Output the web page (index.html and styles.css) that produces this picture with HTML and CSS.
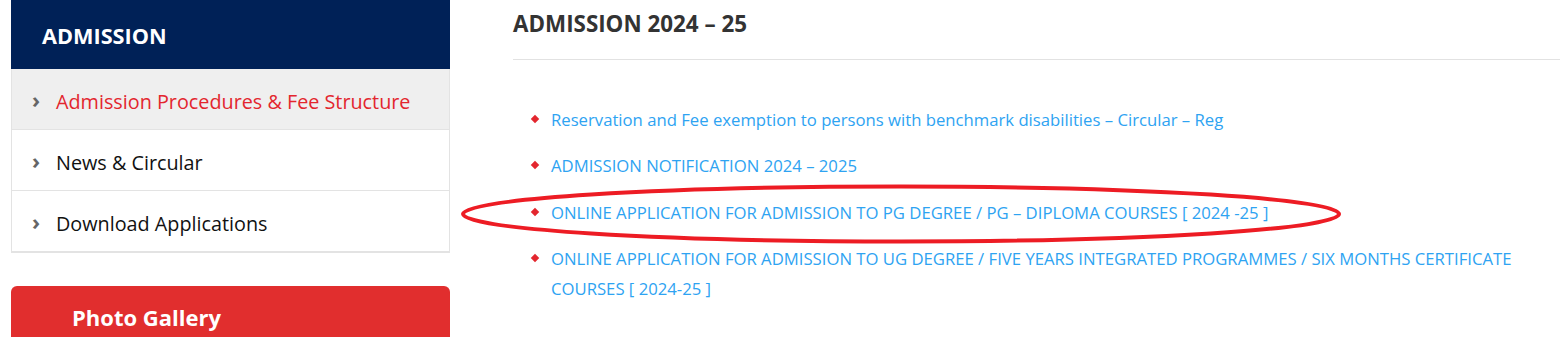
FILE: index.html
```html
<!DOCTYPE html>
<html lang="en">
<head>
<meta charset="utf-8">
<title>Admission 2024 – 25</title>
<link rel="stylesheet" href="styles.css">
</head>
<body>
<div class="page">
  <aside class="sidebar">
    <div class="side-head">ADMISSION</div>
    <ul class="side-menu">
      <li class="active"><span class="chev">&#8250;</span><a href="#">Admission Procedures &amp; Fee Structure</a></li>
      <li><span class="chev">&#8250;</span><a href="#">News &amp; Circular</a></li>
      <li><span class="chev">&#8250;</span><a href="#">Download Applications</a></li>
    </ul>
    <div class="gallery-head">Photo Gallery</div>
  </aside>
  <main class="content">
    <h2 class="title">ADMISSION 2024 – 25</h2>
    <ul class="links">
      <li><a href="#">Reservation and Fee exemption to persons with benchmark disabilities – Circular – Reg</a></li>
      <li><a href="#">ADMISSION NOTIFICATION 2024 – 2025</a></li>
      <li><a href="#">ONLINE APPLICATION FOR ADMISSION TO PG DEGREE / PG – DIPLOMA COURSES [ 2024 -25 ]</a></li>
      <li><a href="#">ONLINE APPLICATION FOR ADMISSION TO UG DEGREE / FIVE YEARS INTEGRATED PROGRAMMES / SIX MONTHS CERTIFICATE COURSES [ 2024-25 ]</a></li>
    </ul>
  </main>
</div>
<svg class="mark" width="1560" height="337" viewBox="0 0 1560 337" aria-hidden="true">
  <ellipse cx="901" cy="214" rx="438" ry="27.5" fill="none" stroke="#ed1c24" stroke-width="4"/>
</svg>
</body>
</html>
```

FILE: styles.css
```css
html, body {
  margin: 0;
  padding: 0;
  background: #fff;
}
body {
  font-family: "Open Sans", "Noto Sans", sans-serif;
  overflow: hidden;
  height: 337px;
  position: relative;
}
.page {
  display: flex;
  gap: 63px;
  padding-left: 11px;
}
.sidebar {
  width: 439px;
  flex: none;
}
.side-head {
  background: #002157;
  color: #fff;
  font-weight: 700;
  font-size: 21.7px;
  height: 69px;
  line-height: 72px;
  padding-left: 31px;
}
.side-menu {
  list-style: none;
  margin: 0;
  padding: 0;
  border-left: 1px solid #e3e3e3;
  border-right: 1px solid #e3e3e3;
  border-bottom: 2px solid #e3e3e3;
}
.side-menu li {
  display: flex;
  align-items: center;
  border-bottom: 1px solid #e3e3e3;
  padding-left: 20px;
  padding-top: 4px;
  box-sizing: border-box;
  height: 61px;
  font-size: 19.8px;
}
.side-menu li:last-child {
  border-bottom: none;
  height: 60px;
}
.side-menu li.active {
  background: #efefef;
}
.side-menu a {
  color: #111;
  text-decoration: none;
  font-weight: 500;
}
.side-menu li.active a {
  color: #e3262e;
}
.chev {
  color: #666;
  font-weight: 700;
  font-size: 22px;
  width: 24px;
  margin-top: -4px;
}
.gallery-head {
  margin-top: 33px;
  background: #e12e2e;
  border-radius: 6px 6px 0 0;
  color: #fff;
  font-weight: 700;
  font-size: 22px;
  height: 60px;
  line-height: 62px;
  padding-left: 61px;
}
.content {
  flex: 1;
}
.title {
  margin: 0;
  color: #333;
  font-size: 22.4px;
  font-weight: 700;
  height: 59px;
  line-height: 48px;
  border-bottom: 1px solid #e2e2e2;
}
.links {
  list-style: none;
  margin: 0;
  padding: 45px 0 0 38px;
}
.links li {
  position: relative;
  line-height: 30px;
  margin-bottom: 16.4px;
  font-size: 16.7px;
  padding-right: 10px;
}
.links li::before {
  content: "";
  position: absolute;
  left: -19px;
  top: 11px;
  width: 6px;
  height: 6px;
  background: #e3262e;
  transform: rotate(45deg);
}
.links a {
  color: #2ea3f2;
  text-decoration: none;
}
.mark {
  position: absolute;
  left: 0;
  top: 0;
  pointer-events: none;
}
```
